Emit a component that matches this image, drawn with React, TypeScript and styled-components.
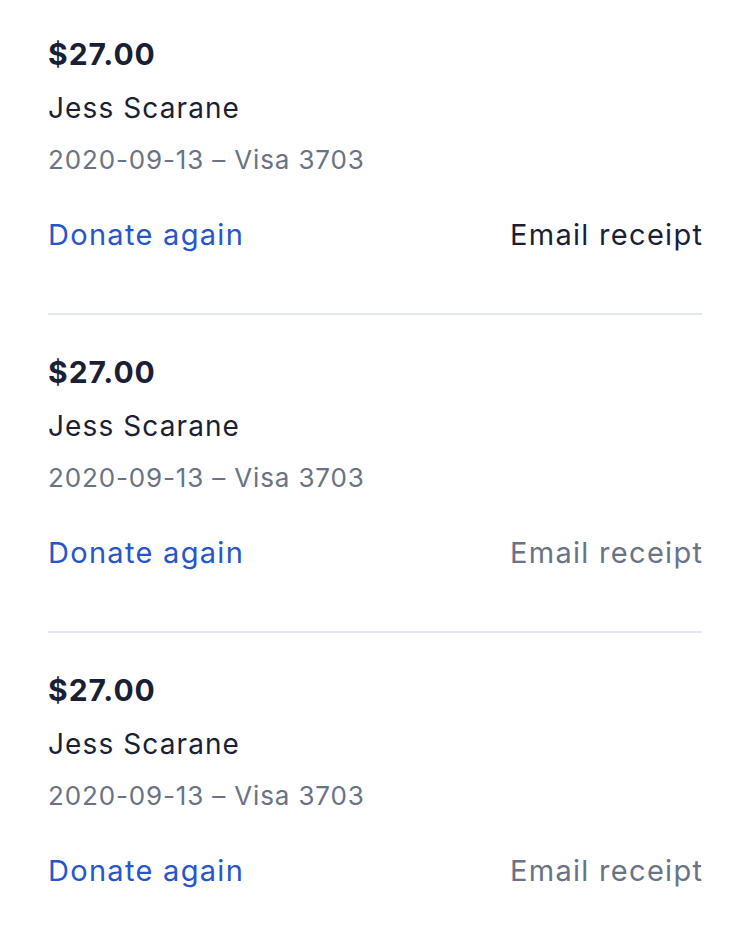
import React from "react";
import styled, { createGlobalStyle } from "styled-components";

const Global = createGlobalStyle`
  html, body { margin: 0; padding: 0; background: #ffffff; }
  body { font-family: Inter, "Noto Sans", "Liberation Sans", sans-serif; -webkit-font-smoothing: antialiased; }
`;

const List = styled.div`
  display: flex;
  flex-direction: column;
  padding: 0 48px;
`;

const Item = styled.div`
  display: flex;
  flex-direction: column;
  padding: 37px 0 58px;
  border-bottom: 2px solid #e3e8ee;
  &:first-child { padding-top: 34px; }
  &:last-child { border-bottom: none; }
`;

const Amount = styled.div`
  font-size: 30px;
  line-height: 40px;
  font-weight: 700;
  letter-spacing: 1px;
  color: #1a1f36;
`;

const Name = styled.div`
  margin-top: 14px;
  font-size: 28px;
  line-height: 40px;
  letter-spacing: 1.1px;
  color: #1a1f36;
`;

const Meta = styled.div`
  margin-top: 12px;
  font-size: 26px;
  line-height: 40px;
  letter-spacing: 0.85px;
  color: #697386;
`;

const Actions = styled.div`
  margin-top: 35px;
  display: flex;
  justify-content: space-between;
  align-items: center;
`;

const ActionLink = styled.a<{ $tone: "blue" | "dark" | "gray" }>`
  font-size: 29px;
  line-height: 40px;
  letter-spacing: 1.3px;
  margin-right: -1.3px;
  text-decoration: none;
  cursor: pointer;
  color: ${(p) => (p.$tone === "blue" ? "#2656c9" : p.$tone === "dark" ? "#1a1f36" : "#697386")};
`;

const rows = [
  { emailTone: "dark" as const },
  { emailTone: "gray" as const },
  { emailTone: "gray" as const },
];

export default function App() {
  return (
    <>
      <Global />
      <List>
        {rows.map((r, i) => (
          <Item key={i}>
            <Amount>$27.00</Amount>
            <Name>Jess Scarane</Name>
            <Meta>2020-09-13 – Visa 3703</Meta>
            <Actions>
              <ActionLink $tone="blue">Donate again</ActionLink>
              <ActionLink $tone={r.emailTone}>Email receipt</ActionLink>
            </Actions>
          </Item>
        ))}
      </List>
    </>
  );
}
